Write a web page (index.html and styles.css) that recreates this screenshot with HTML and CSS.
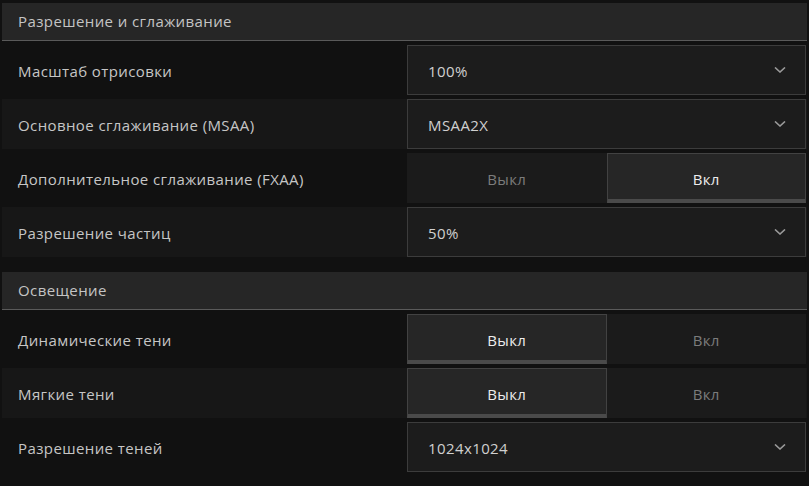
FILE: index.html
```html
<!DOCTYPE html>
<html lang="ru">
<head>
    <meta charset="UTF-8">
    <title>Графика</title>
    <link rel="stylesheet" href="styles.css">
</head>
<body>
    <div class="panel">
        <div class="section">
            <div class="section-head">Разрешение и сглаживание</div>

            <div class="row">
                <div class="label">Масштаб отрисовки</div>
                <div class="select">
                    <span>100%</span>
                    <svg class="chev" width="12" height="6" viewBox="0 0 12 6"><path d="M1 0.5 L6 5 L11 0.5" /></svg>
                </div>
            </div>

            <div class="row">
                <div class="label">Основное сглаживание (MSAA)</div>
                <div class="select">
                    <span>MSAA2X</span>
                    <svg class="chev" width="12" height="6" viewBox="0 0 12 6"><path d="M1 0.5 L6 5 L11 0.5" /></svg>
                </div>
            </div>

            <div class="row">
                <div class="label">Дополнительное сглаживание (FXAA)</div>
                <div class="toggle">
                    <div class="opt">Выкл</div>
                    <div class="opt active">Вкл</div>
                </div>
            </div>

            <div class="row">
                <div class="label">Разрешение частиц</div>
                <div class="select">
                    <span>50%</span>
                    <svg class="chev" width="12" height="6" viewBox="0 0 12 6"><path d="M1 0.5 L6 5 L11 0.5" /></svg>
                </div>
            </div>
        </div>

        <div class="section">
            <div class="section-head">Освещение</div>

            <div class="row">
                <div class="label">Динамические тени</div>
                <div class="toggle">
                    <div class="opt active">Выкл</div>
                    <div class="opt">Вкл</div>
                </div>
            </div>

            <div class="row">
                <div class="label">Мягкие тени</div>
                <div class="toggle">
                    <div class="opt active">Выкл</div>
                    <div class="opt">Вкл</div>
                </div>
            </div>

            <div class="row">
                <div class="label">Разрешение теней</div>
                <div class="select">
                    <span>1024x1024</span>
                    <svg class="chev" width="12" height="6" viewBox="0 0 12 6"><path d="M1 0.5 L6 5 L11 0.5" /></svg>
                </div>
            </div>
        </div>
    </div>
</body>
</html>
```

FILE: styles.css
```css
/* General */
body {
    margin: 0;
    background-color: #111111;
    font-family: "Open Sans", "Liberation Sans", sans-serif;
    font-size: 15px;
    letter-spacing: 0.4px;
    color: #c8c8c8;
}

.panel {
    width: 805px;
    padding: 3px 0 0 2px;
}

.section + .section {
    margin-top: 15px;
}

/* Section header */
.section-head {
    height: 37px;
    line-height: 37px;
    padding-left: 16px;
    background-color: #262626;
    border-bottom: 1px solid #5a5a5a;
    color: #c4c4c4;
}

/* Rows */
.row {
    display: grid;
    grid-template-columns: 405px 399px;
    height: 50px;
    margin-top: 4px;
}

.row:nth-child(odd) {
    background-color: #171717;
}

.label {
    display: flex;
    align-items: center;
    padding: 2px 0 0 16px;
    color: #c6c6c6;
}

/* Dropdown */
.select {
    box-sizing: border-box;
    display: flex;
    align-items: center;
    justify-content: space-between;
    padding: 2px 19px 0 20px;
    background-color: #1c1c1c;
    border: 1px solid #3c3c3c;
    color: #d0d0d0;
}

.chev {
    margin-top: -2px;
}

.chev path {
    fill: none;
    stroke: #9a9a9a;
    stroke-width: 1.6;
}

/* On/off toggle */
.toggle {
    display: grid;
    grid-template-columns: 1fr 1fr;
    background-color: #1b1b1b;
}

.opt {
    box-sizing: border-box;
    display: flex;
    align-items: center;
    justify-content: center;
    padding-top: 2px;
    color: #7c7c7c;
}

.opt.active {
    background-color: #262626;
    border: 1px solid #424242;
    border-bottom: 4px solid #4a4a4a;
    padding-top: 4px;
    color: #ececec;
}
```
